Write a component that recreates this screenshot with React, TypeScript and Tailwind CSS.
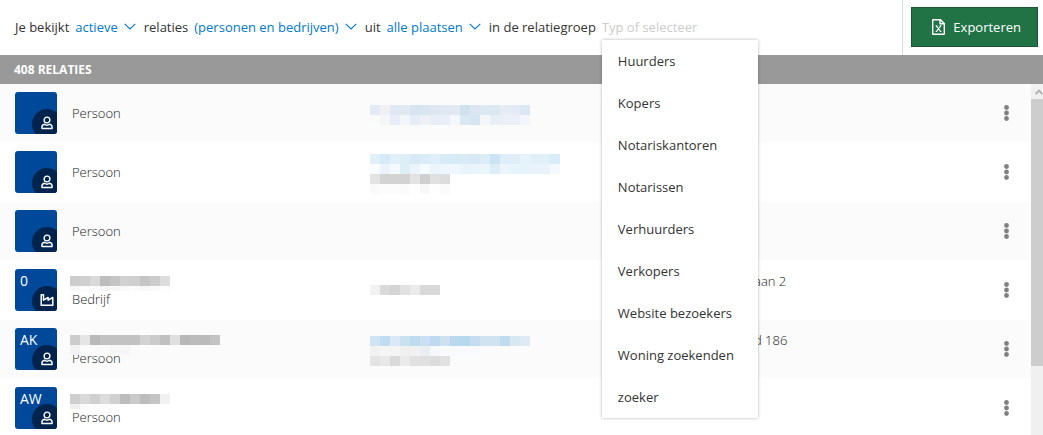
import React from "react";

type Kind = "Persoon" | "Bedrijf";

interface Relation {
  id: number;
  kind: Kind;
  initials: string;
  name?: string[];
  shortEdge?: boolean;
  contact?: string[];
  link?: boolean;
  address?: string;
}

const relations: Relation[] = [
  {
    id: 1,
    kind: "Persoon",
    initials: "",
    link: true,
    contact: [
      "e2ebf5 f1f1f4 dee9f3 e1eaf2 d6e5f1 d8e6f2 dfe6f2 dee9f3 e1eaf2 cfe1ee dce5f2 dce9f3 dae8f1 e7ebf3 e5ebf4 dae7f4",
      "f9fbfa f5f6f8 e8eef7 f3f5fa e5edf6 eef2f7 e8eef6 e9eff8 f5f7fa dae8f3 d6e5f2 f4f6fa e8f0f7 ecf0f6 ebeff7 f3f5fa",
    ],
  },
  {
    id: 2,
    kind: "Persoon",
    initials: "",
    link: true,
    contact: [
      "e1eff9 d6eaf7 e1eff9 deeef7 d8eaf7 daecf8 e0eef8 d7eaf7 d7eaf7 daebf6 d6e9f7 deecf8 cce3f5 dfedf8 dfedf8 e7f3fa e1eff9 e1eff9 d7ebf8",
      "f8fcff ebf4fc f4fafe deeef7 ebf4fb f4fcfe ebf4fb edf5fd eff6fe e8f4fc eaf4fb ebf5fc deeef8 ebf5fb e6f4fb e5f3fa eaf3fb eaf3fb f3f9fd",
      "e3e3e3 d3d3d3 d3d3d3 d3d3d3 e3e3e3 cfcfcf e1e1e1 dddddd",
      "fafafa fcfcfc fcfcfc fbfbfb fefefe f8f8f8 fefefe fbfbfb",
    ],
  },
  { id: 3, kind: "Persoon", initials: "" },
  {
    id: 4,
    kind: "Bedrijf",
    initials: "0",
    shortEdge: true,
    name: [
      "cdcdcd cfcfcf dadada bdbdbd c4c4c4 d1d1d1 cfcfcf c5c5c5 cccccc dddddd",
      "f7f7f7 fcfcfc fafafa f6f6f6 f7f7f7 f9f9f9 fbfbfb f8f8f8 fafafa fcfcfc",
    ],
    contact: ["f2f2f2 dadada d4d4d4 e1e1e1 ebebeb d9d9d9 d9d9d9"],
    address: "aan 2",
  },
  {
    id: 5,
    kind: "Persoon",
    initials: "AK",
    link: true,
    name: [
      "cccccc e5e5e5 bababa c2c2c2 c2c2c2 c2c2c2 c2c2c2 d2d2d2 cbcbcb c0c0c0 dfdfdf b8b8b8 bcbcbc bababa c3c3c3",
      "f2f2f2 fafafa fafafa fafafa f6f6f6 f6f6f6",
    ],
    contact: [
      "cfe4f2 c0dcef dae9f3 cae1f2 bfdcef cadff3 bfdaf0 cde2f1 b8d8ee b6d8ed c6ddf1 cfe3f1 cfe4f1 bfdcee d8e8f2 dfebf4",
      "f2f2f2 f5f5f5 f4f4f4 efefef f1f1f1 e9eef2 f5f7fa fafafa f8fafe f8fafe f8fafe",
      "e4e4e4 e9e9e9 dadada eaeaea e1e1e1 e0e0e0 dcdcdc e1e1e1",
    ],
    address: "d 186",
  },
  {
    id: 6,
    kind: "Persoon",
    initials: "AW",
    shortEdge: true,
    name: [
      "cecece d9d9d9 d0d0d0 dcdcdc d0d0d0 bcbcbc cacaca bdbdbd c5c5c5 f1f1f1",
      "f0f0f0 fafafa fcfcfc fcfcfc fcfcfc",
    ],
  },
];

const groups = [
  "Huurders",
  "Kopers",
  "Notariskantoren",
  "Notarissen",
  "Verhuurders",
  "Verkopers",
  "Website bezoekers",
  "Woning zoekenden",
  "zoeker",
];

function Mosaic({ rows, shortEdge = false }: { rows: string[]; shortEdge?: boolean }) {
  return (
    <div aria-hidden="true">
      {rows.map((row, y) => (
        <div key={y} className={shortEdge && y === rows.length - 1 ? "flex h-[5px]" : "flex h-[10px]"}>
          {row.split(" ").map((color, x) => (
            <span key={x} className="w-[10px]" style={{ backgroundColor: `#${color}` }} />
          ))}
        </div>
      ))}
    </div>
  );
}

function PersonIcon() {
  return (
    <svg viewBox="0 0 12 14" className="h-[14px] w-3" fill="none" stroke="currentColor" strokeWidth="1.4" strokeLinejoin="round" aria-hidden="true">
      <circle cx="6" cy="4" r="2.900" />
      <path d="M3.500 8.300c-1.600.3-2.600 1.500-2.600 3v1.200h10.200v-1.200c0-1.500-1-2.700-2.600-3C7.200 9.300 4.800 9.300 3.500 8.300z" />
    </svg>
  );
}

function FactoryIcon() {
  return (
    <svg viewBox="0 0 14 12" className="h-3 w-[14px]" fill="none" stroke="currentColor" strokeWidth="1.5" strokeLinejoin="round" aria-hidden="true">
      <path d="M1.200 11.200V.8h2.300v5.400l4.600-2.700v2.700l4.700-2.700v7.700z" />
    </svg>
  );
}

function Avatar({ kind, initials }: { kind: Kind; initials: string }) {
  return (
    <div className="relative size-[42px] shrink-0 overflow-hidden rounded-[3px] bg-[#00489a] px-[5px] pt-[3px] text-sm leading-[18px] font-normal text-white">
      {initials}
      <span className="absolute -right-[5px] -bottom-[5px] flex size-[30px] items-center justify-center rounded-full bg-[#00244d] pb-[2px]">
        {kind === "Persoon" ? <PersonIcon /> : <FactoryIcon />}
      </span>
    </div>
  );
}

function Filter({ label, value }: { label: string; value: string }) {
  return (
    <span className="flex items-center gap-[6px] text-[#0079cd]">
      <select aria-label={label} className="field-sizing-content cursor-pointer appearance-none bg-transparent font-medium outline-none">
        <option>{value}</option>
      </select>
      <svg viewBox="0 0 12 7" className="pointer-events-none h-[7px] w-3" fill="none" stroke="currentColor" strokeWidth="1.1" aria-hidden="true">
        <path d="M.7.800 6 6 11.300.800" />
      </svg>
    </span>
  );
}

export default function App() {
  return (
    <div className="flex h-screen flex-col overflow-hidden bg-white font-['Open_Sans',sans-serif] text-[13px] leading-[18px] text-[#333]">
      <header className="flex h-[55px] shrink-0 items-stretch justify-between">
        <div className="flex items-center gap-2 pb-[2px] pl-[15px] whitespace-nowrap">
          <div className="flex gap-[6px]">
            <span>Je bekijkt</span>
            <Filter label="Status" value="actieve" />
          </div>
          <div className="flex gap-[6px]">
            <span>relaties</span>
            <Filter label="Soort" value="(personen en bedrijven)" />
          </div>
          <div className="flex gap-[6px]">
            <span>uit</span>
            <Filter label="Plaats" value="alle plaatsen" />
          </div>
          <div className="flex gap-[6px]">
            <label htmlFor="group">in de relatiegroep</label>
            <div className="relative">
              <input
                id="group"
                type="text"
                placeholder="Typ of selecteer"
                className="block w-[156px] bg-transparent font-medium outline-none placeholder:text-[#ccc]"
              />
              <ul className="absolute top-[22px] left-0 z-10 w-full bg-white shadow-[0_0_3px_rgba(0,0,0,0.3)]">
                {groups.map((group) => (
                  <li key={group}>
                    <button type="button" className="flex h-[42px] w-full items-center px-4 text-left">
                      {group}
                    </button>
                  </li>
                ))}
              </ul>
            </div>
          </div>
        </div>
        <div className="flex items-center border-l border-[#ddd] pr-[5px] pb-[2px] pl-2">
          <button type="button" className="flex h-10 items-center gap-2 border border-[#1b5434] bg-[#217346] px-4 pl-5 font-medium text-white">
            <svg viewBox="0 0 13 16" className="h-4 w-[13px]" fill="none" stroke="currentColor" strokeWidth="1.4" aria-hidden="true">
              <path d="M.7 1.200Q.7.700 1.200.700H8.500L12.300 4.500V14.800Q12.300 15.300 11.800 15.300H1.200Q.7 15.300.7 14.800ZM8 .7V4.800H12.300" />
              <path d="M4.300 6.800 8.700 12.500M8.700 6.800 4.300 12.500M3.600 6.800H5.400M7.700 6.800H9.400M3.600 12.500H5.400M7.700 12.500H9.400" strokeWidth="1.1" />
            </svg>
            Exporteren
          </button>
        </div>
      </header>

      <h1 className="flex h-[29px] shrink-0 items-center bg-[#999] px-[14px] text-xs font-bold text-white">408 RELATIES</h1>

      <main className="flex min-h-0 flex-1">
        <div className="min-w-0 flex-1 overflow-hidden">
          <table className="w-full table-fixed border-separate border-spacing-0 font-light text-[#222]">
            <colgroup>
              <col className="w-[370px]" />
              <col className="w-[384px]" />
              <col />
              <col className="w-12" />
            </colgroup>
            <tbody>
              {relations.map((r) => (
                <tr key={r.id} className="h-[59px] odd:bg-[#fbfbfb] [&>td]:border-b [&>td]:border-white [&>td]:p-0">
                  <td>
                    <div className="flex items-center pl-[15px]">
                      <Avatar kind={r.kind} initials={r.initials} />
                      <div className="pl-[15px]">
                        {r.name && (
                          <div className="relative -ml-[2px] h-[18px] pt-1">
                            <div className="absolute">
                              <Mosaic rows={r.name} shortEdge={r.shortEdge} />
                            </div>
                          </div>
                        )}
                        {r.kind}
                      </div>
                    </div>
                  </td>
                  <td>
                    {r.contact && (
                      <div className={r.link ? "pt-1" : ""}>
                        <Mosaic rows={r.contact} />
                      </div>
                    )}
                  </td>
                  <td>
                    <div className="h-9">{r.address}</div>
                  </td>
                  <td>
                    <button type="button" aria-label="Acties" className="flex size-12 items-center justify-center text-[#808080]">
                      <svg viewBox="0 0 6 16" className="h-4 w-[6px]" fill="currentColor" aria-hidden="true">
                        <circle cx="2.500" cy="2.500" r="2.400" />
                        <circle cx="2.500" cy="8" r="2.400" />
                        <circle cx="2.500" cy="13.500" r="2.400" />
                      </svg>
                    </button>
                  </td>
                </tr>
              ))}
            </tbody>
          </table>
        </div>
        <div className="flex w-3 shrink-0 flex-col bg-[#f0f0f0]" aria-hidden="true">
          <div className="flex h-[15px] items-center justify-center pl-1 text-[#b0b0b0]">
            <svg viewBox="0 0 8 6" className="h-[6px] w-2" fill="none" stroke="currentColor" strokeWidth="1.800">
              <path d="M.7 5 4 1.600 7.300 5" />
            </svg>
          </div>
          <div className="h-[267px] bg-[#cdcdcd]" />
        </div>
      </main>
    </div>
  );
}
